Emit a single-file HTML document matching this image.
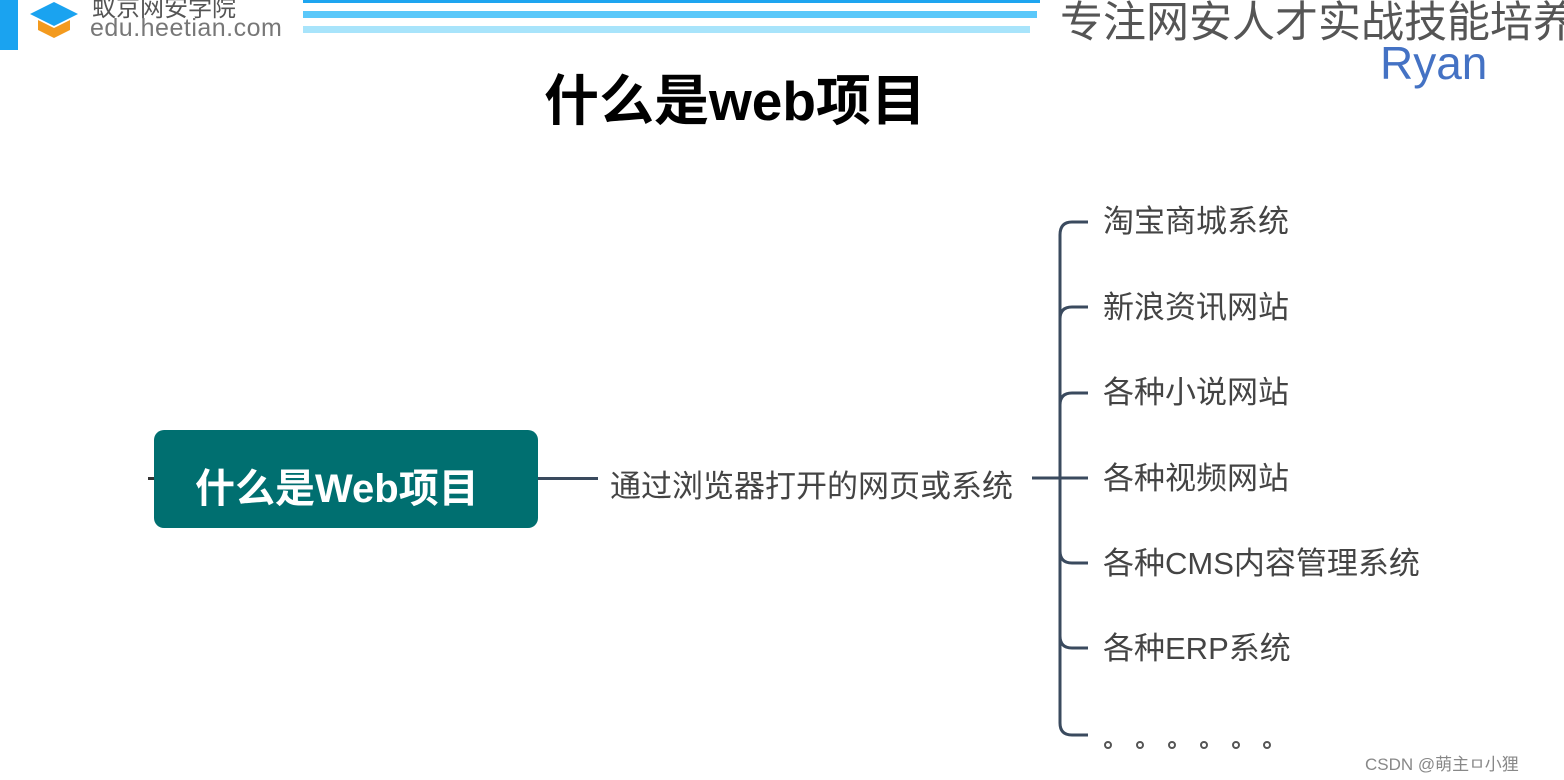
<!DOCTYPE html>
<html><head><meta charset="utf-8"><style>
body{margin:0;width:1564px;height:780px;background:#fff;position:relative;overflow:hidden;font-family:"Liberation Sans","Noto Sans CJK SC",sans-serif}
.a{position:absolute;white-space:nowrap}
.it{position:absolute;left:1103px;font-size:31px;color:#444;line-height:1}
</style></head><body>
<div class="a" style="left:0;top:0;width:18px;height:50px;background:#1aa3f0"></div>
<svg class="a" style="left:26px;top:0" width="56" height="42" viewBox="0 0 56 42">
<path d="M4 14 L28 2 L52 14 L28 26 Z" fill="#1aa3f0"/>
<path d="M12 20 L12 30 L28 38 L44 30 L44 20 L28 28 Z" fill="#f39a1e"/>
</svg>
<div class="a" style="left:92px;top:-12px;font-size:24px;color:#555">蚁京网安学院</div>
<div class="a" style="left:90px;top:14px;font-size:25px;color:#777;letter-spacing:0.5px">edu.heetian.com</div>
<div class="a" style="left:303px;top:0;width:737px;height:3px;background:#1ea5f0"></div>
<div class="a" style="left:303px;top:11px;width:734px;height:7px;background:#5ac8fa"></div>
<div class="a" style="left:303px;top:26px;width:727px;height:7px;background:#a8e4fb"></div>
<div class="a" style="left:1060px;top:-12px;font-size:43px;color:#555">专注网安人才实战技能培养</div>
<div class="a" style="left:1380px;top:36px;font-size:46px;color:#4472c4">Ryan</div>
<div class="a" style="left:544px;top:56px;font-size:55px;font-weight:bold;color:#000">什么是web项目</div>
<div class="a" style="left:148px;top:477px;width:8px;height:3px;background:#333"></div>
<div class="a" style="left:154px;top:430px;width:384px;height:98px;background:#006f70;border-radius:10px"></div>
<div class="a" style="left:195px;top:456px;font-size:40px;font-weight:bold;color:#fff">什么是Web项目</div>
<div class="a" style="left:538px;top:477px;width:60px;height:3px;background:#3a4a5e"></div>
<div class="a" style="left:610px;top:461px;font-size:31px;color:#444">通过浏览器打开的网页或系统</div>
<svg class="a" style="left:1028px;top:215px" width="70" height="530">
<g fill="none" stroke="#3a4a5e" stroke-width="3">
<path d="M4 263 H60"/>
<path d="M60 7 H44 Q32 7 32 20 V508 Q32 520 44 520 H60"/>
<path d="M60 92 H44 Q32 92 32 104"/>
<path d="M60 178 H44 Q32 178 32 190"/>
<path d="M32 336 Q32 348 44 348 H60"/>
<path d="M32 421 Q32 433 44 433 H60"/>
</g></svg>
<div class="it" style="top:206px">淘宝商城系统</div>
<div class="it" style="top:292px">新浪资讯网站</div>
<div class="it" style="top:377px">各种小说网站</div>
<div class="it" style="top:463px">各种视频网站</div>
<div class="it" style="top:548px">各种CMS内容管理系统</div>
<div class="it" style="top:633px">各种ERP系统</div>
<svg class="a" style="left:1100px;top:736px" width="180" height="20"><g fill="none" stroke="#555" stroke-width="2">
<circle cx="8" cy="9" r="3"/><circle cx="40" cy="9" r="3"/><circle cx="72" cy="9" r="3"/><circle cx="104" cy="9" r="3"/><circle cx="136" cy="9" r="3"/><circle cx="167" cy="9" r="3"/></g></svg>
<div class="a" style="left:1365px;top:750px;font-size:17px;color:#888">CSDN @萌主ㅁ小狸</div>
</body></html>
